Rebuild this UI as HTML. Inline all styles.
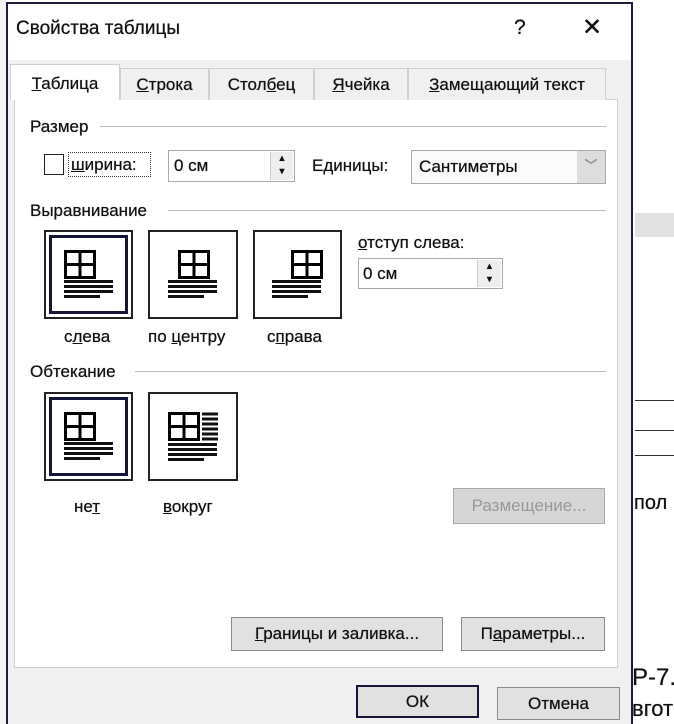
<!DOCTYPE html>
<html><head><meta charset="utf-8"><style>
*{margin:0;padding:0;box-sizing:border-box}
body{width:674px;height:724px;position:relative;background:#fff;overflow:hidden;font-family:"Liberation Sans","DejaVu Sans",sans-serif;color:#111;font-size:17px;text-shadow:0 0 0.6px #222}
.a{position:absolute}
.dlg{left:6px;top:2px;width:627px;height:722px;border:2px solid #1e1e3a;border-bottom:none;background:#f0f0f0}
.title{left:0;top:0;width:623px;height:56px;background:#fff}
.panel{left:14px;top:99px;width:604px;height:569px;background:#fff;border:1px solid #d0d0d0}
.tab{top:68px;height:32px;border:1px solid #d0d0d0;border-bottom:none;background:#f0f0f0;text-align:center;line-height:31px;font-size:17px}
.tab.act{top:64px;height:36px;background:#fff;z-index:2;line-height:38px}
u{text-decoration:underline}
.hl{height:1px;background:#bbb}
.box{border:1px solid #aaa;background:#fff}
.btn{border:1px solid #8a8a8a;background:#e1e1e1;text-align:center;font-size:17px}
</style></head><body>
<div class="a" style="left:635px;top:213px;width:39px;height:24px;background:#e2e2e2"></div>
<div class="a" style="left:635px;top:400px;width:39px;height:1px;background:#333"></div>
<div class="a" style="left:635px;top:430px;width:39px;height:1px;background:#333"></div>
<div class="a" style="left:635px;top:455px;width:39px;height:1px;background:#333"></div>
<div class="a" style="left:634px;top:492px;font-size:20px">пол</div>
<div class="a" style="left:632px;top:664px;font-size:24px">Р-7.</div>
<div class="a" style="left:632px;top:696px;font-size:22px">вгот</div>
<div class="a" style="left:0;top:0;width:6px;height:724px;background:#f4f4f4"></div>

<div class="a dlg">
 <div class="a title"></div>
 <div class="a" style="left:8px;top:14px;font-size:19px">Свойства таблицы</div>
 <div class="a" style="left:506px;top:12px;font-size:21px">?</div>
 <div class="a" style="left:574px;top:9px;font-size:24px;font-weight:300">✕</div>
</div>

<div class="a panel"></div>
<div class="a tab act" style="left:10px;width:110px"><u>Т</u>аблица</div>
<div class="a tab" style="left:120px;width:89px"><u>С</u>трока</div>
<div class="a tab" style="left:209px;width:105px">Стол<u>б</u>ец</div>
<div class="a tab" style="left:314px;width:94px"><u>Я</u>чейка</div>
<div class="a tab" style="left:408px;width:198px"><u>З</u>амещающий текст</div>

<div class="a" style="left:30px;top:117px">Размер</div>
<div class="a hl" style="left:100px;top:126px;width:506px"></div>
<div class="a" style="left:44px;top:154px;width:20px;height:21px;border:1.5px solid #222;background:#fff"></div>
<div class="a" style="left:68px;top:152px;width:83px;height:25px;border:1px dotted #333;padding-left:2px;line-height:23px"><u>ш</u>ирина:</div>
<div class="a box" style="left:168px;top:150px;width:127px;height:32px;padding-left:5px;line-height:30px">0 см</div>
<div class="a" style="left:270px;top:152px;width:23px;height:28px;background:#eee;border-left:1px solid #ccc;font-size:9px;text-align:center;line-height:13px">▲<br>▼</div>
<div class="a" style="left:312px;top:156px">Единицы:</div>
<div class="a box" style="left:411px;top:150px;width:195px;height:34px;padding-left:7px;line-height:32px;background:#fbfbfb">Сантиметры</div>
<div class="a" style="left:577px;top:151px;width:28px;height:32px;background:#ddd;color:#999;text-align:center;line-height:30px;font-size:13px">﹀</div>

<div class="a" style="left:30px;top:201px">Выравнивание</div>
<div class="a hl" style="left:168px;top:210px;width:438px"></div>

<svg class="a" style="left:0;top:0" width="674" height="724">
 <defs>
  <g id="grid"><rect x="1.5" y="1.5" width="29" height="26" fill="none" stroke="#000" stroke-width="3"/><line x1="16" y1="1" x2="16" y2="28" stroke="#000" stroke-width="3"/><line x1="1" y1="14.5" x2="31" y2="14.5" stroke="#000" stroke-width="3"/></g>
  <g id="lines" stroke="#111" stroke-width="3"><line x1="0" y1="1.5" x2="49" y2="1.5"/><line x1="0" y1="6.5" x2="49" y2="6.5"/><line x1="0" y1="11.5" x2="49" y2="11.5"/><line x1="0" y1="16.5" x2="36" y2="16.5"/></g>
 </defs>
 <rect x="45" y="231" width="87" height="87" fill="#fff" stroke="#222" stroke-width="2"/>
 <rect x="50.5" y="236.5" width="76" height="76" fill="none" stroke="#15153a" stroke-width="3"/>
 <use href="#grid" x="64" y="250"/><use href="#lines" x="64" y="280"/>
 <rect x="149" y="231" width="88" height="87" fill="#fff" stroke="#222" stroke-width="2"/>
 <use href="#grid" x="178" y="250"/><use href="#lines" x="168" y="280"/>
 <rect x="254" y="231" width="87" height="87" fill="#fff" stroke="#222" stroke-width="2"/>
 <use href="#grid" x="291" y="250"/><use href="#lines" x="272" y="280"/>
 <rect x="45" y="393" width="87" height="87" fill="#fff" stroke="#222" stroke-width="2"/>
 <rect x="50.5" y="398.5" width="76" height="76" fill="none" stroke="#15153a" stroke-width="3"/>
 <use href="#grid" x="64" y="412"/><use href="#lines" x="64" y="442"/>
 <rect x="149" y="393" width="88" height="87" fill="#fff" stroke="#222" stroke-width="2"/>
 <use href="#grid" x="168" y="412"/>
 <g stroke="#111" stroke-width="3"><line x1="202" y1="414" x2="218" y2="414"/><line x1="202" y1="419" x2="218" y2="419"/><line x1="202" y1="424" x2="218" y2="424"/><line x1="202" y1="429" x2="218" y2="429"/><line x1="202" y1="434" x2="218" y2="434"/><line x1="202" y1="439" x2="218" y2="439"/></g>
 <use href="#lines" x="168" y="443"/>
</svg>

<div class="a" style="left:64px;top:327px">с<u>л</u>ева</div>
<div class="a" style="left:148px;top:327px">по <u>ц</u>ентру</div>
<div class="a" style="left:267px;top:327px">с<u>п</u>рава</div>
<div class="a" style="left:358px;top:233px"><u>о</u>тступ слева:</div>
<div class="a box" style="left:358px;top:258px;width:145px;height:31px;padding-left:4px;line-height:29px">0 см</div>
<div class="a" style="left:477px;top:260px;width:24px;height:27px;background:#eee;border-left:1px solid #ccc;font-size:9px;text-align:center;line-height:13px">▲<br>▼</div>

<div class="a" style="left:30px;top:362px">Обтекание</div>
<div class="a hl" style="left:135px;top:371px;width:471px"></div>
<div class="a" style="left:74px;top:497px">не<u>т</u></div>
<div class="a" style="left:163px;top:497px"><u>в</u>округ</div>
<div class="a btn" style="left:453px;top:488px;width:152px;height:36px;line-height:34px;color:#999;background:#d6d6d6;border-color:#aaa;text-shadow:none">Размещение...</div>

<div class="a btn" style="left:231px;top:617px;width:212px;height:34px;line-height:32px"><u>Г</u>раницы и заливка...</div>
<div class="a btn" style="left:461px;top:617px;width:144px;height:34px;line-height:32px">П<u>а</u>раметры...</div>
<div class="a btn" style="left:356px;top:685px;width:123px;height:33px;line-height:29px;border:2px solid #15153a">ОК</div>
<div class="a btn" style="left:497px;top:687px;width:123px;height:33px;line-height:31px">Отмена</div>
</body></html>
